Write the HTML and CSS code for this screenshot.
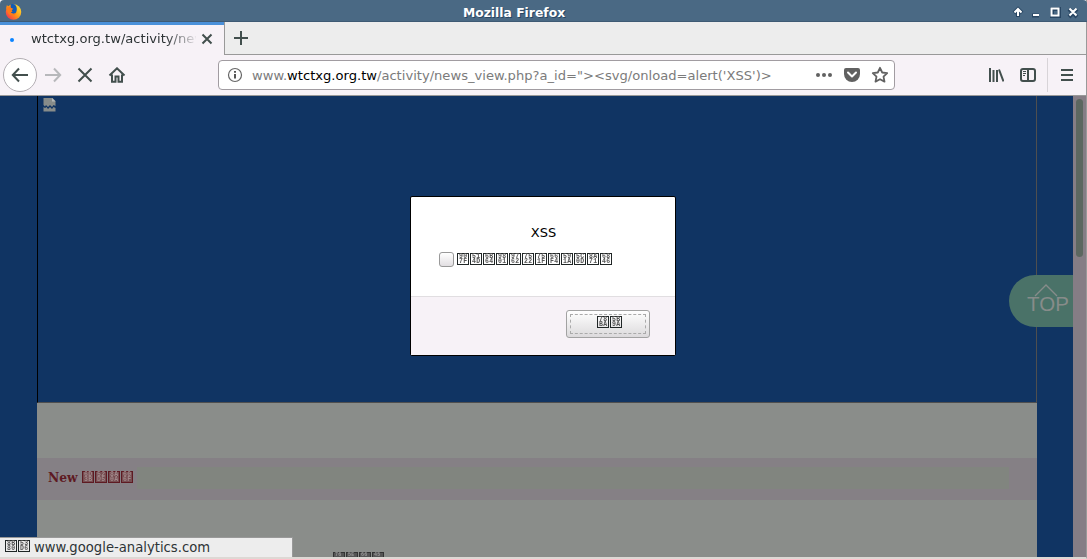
FILE: index.html
```
<!DOCTYPE html>
<html lang="zh-Hant">
<head>
<meta charset="utf-8">
<title>Mozilla Firefox</title>
<link rel="stylesheet" href="styles.css">
</head>
<body>
<div class="window">
  <header class="titlebar">
    <svg class="fox" width="17" height="17" viewBox="0 0 18 18">
      <defs><linearGradient id="flame" x1="1" y1="0" x2="0" y2="1"><stop offset="0" stop-color="#fff13a"/><stop offset=".5" stop-color="#ff9a16"/><stop offset="1" stop-color="#f5195b"/></linearGradient></defs>
      <circle cx="9" cy="9.500" r="8.200" fill="url(#flame)"/>
      <path d="M1 6 2 2l2 2 2-2 2 3Z" fill="#ff8a18"/>
      <path d="M6 1.500C9 0 12.500 2 12.500 6c0 4-1.500 6-4.500 5-2-.5-3-2-3-3l3-1-2-2Z" fill="#125bb5"/>
      <path d="M2 5c2-1 3-1 5 .5l2 .5-2 1.500 1 1.500-2 1c1 2 4 1.500 6 0-1 3-4 4-7 2.500C3 11 2 8 2 5Z" fill="#ff7a18"/>
    </svg>
    <span class="title">Mozilla Firefox</span>
    <svg class="winbtns" width="70" height="22" viewBox="0 0 70 22">
      <g fill="none" stroke="#284663" stroke-width="4"><path d="M8 17V9M4 13l4-4 4 4M22 15.500h7M42 9h7v7h-7zM59 9l8 8M67 9l-8 8"/></g>
      <g fill="none" stroke="#fff" stroke-width="2"><path d="M8 16V9M4.500 12.500 8 9l3.500 3.500M23 15h6M41.500 8.500h7v7h-7zM59.500 8.500l7 7M66.500 8.500l-7 7"/></g>
    </svg>
  </header>
  <div class="tabs">
    <div class="tab"><i class="dot"></i><span class="tabtext">wtctxg.org.tw/activity/ne<span class="fade">v</span></span>
      <svg class="close" width="12" height="12" viewBox="0 0 12 12"><path d="m1.500 1.500 9 9m0-9-9 9" class="line"/></svg></div>
    <div class="newtab"><svg width="16" height="16" viewBox="0 0 16 16"><path d="M8 1v14M1 8h14" class="line"/></svg></div>
  </div>
  <nav class="toolbar">
    <div class="back"><svg width="18" height="16" viewBox="0 0 18 16"><path d="M17 8H2M8 1.500 1.800 8 8 14.500" class="line"/></svg></div>
    <svg class="forward" width="18" height="16" viewBox="0 0 18 16"><path d="M1 8h15M10 1.500 16.200 8 10 14.500" class="line"/></svg>
    <svg class="stop" width="16" height="16" viewBox="0 0 16 16"><path d="m1.500 1.500 13 13m0-13-13 13" class="line"/></svg>
    <svg class="home" width="18" height="16" viewBox="0 0 18 16"><path d="M1.500 8.500 9 1.300l7.500 7.200M4 7.500v7.300h3.500V9.500h3v5.300H14V7.500" class="line"/></svg>
    <div class="urlbar">
      <svg width="16" height="16" viewBox="0 0 16 16"><circle cx="8" cy="8" r="6.500" fill="none" stroke="#666" stroke-width="1.200"/><path d="M8 7v4.500M8 4v1.800" stroke="#555" stroke-width="2"/></svg>
      <span class="url">www.<b>wtctxg.org.tw</b>/activity/news_view.php?a_id="&gt;&lt;svg/onload=alert('XSS')&gt;</span>
      <svg class="more" width="18" height="16" viewBox="0 0 18 16" fill="#616161"><circle cx="3" cy="8" r="2"/><circle cx="9" cy="8" r="2"/><circle cx="15" cy="8" r="2"/></svg>
      <svg class="pocket" width="16" height="16" viewBox="0 0 16 16"><path d="M2 1h12q2 0 2 2v4a8 8 0 0 1-16 0V3q0-2 2-2Z" fill="#616161"/><path d="m4 5.500 4 4 4-4" fill="none" stroke="#fff" stroke-width="2" stroke-linecap="round" stroke-linejoin="round"/></svg>
      <svg width="18" height="18" viewBox="0 0 18 18"><path d="m9 1.800 2.200 4.700 5 .6-3.700 3.500 1 5L9 13.200l-4.500 2.400 1-5L1.800 7.100l5-.6Z" fill="none" stroke="#616161" stroke-width="1.800" stroke-linejoin="round"/></svg>
    </div>
    <svg class="library" width="16" height="16" viewBox="0 0 16 16"><path d="M2 1v14M5.500 3v12M9 3v12" class="line"/><path d="m11 2.500 4.500 12" class="line"/></svg>
    <svg class="sidebar" width="16" height="16" viewBox="0 0 16 16"><rect x="1" y="2" width="14" height="12" rx="2" class="line"/><path d="M8 2v12" class="line"/><path d="M3 4.500h3M3 6.500h3M3 8.500h2" stroke="#424f4d"/></svg>
    <div class="burger"><svg width="14" height="14" viewBox="0 0 14 14"><path d="M1 2h12M1 7h12M1 12h12" class="line"/></svg></div>
  </nav>
  <main class="view">
    <div class="page">
      <section class="banner"><svg width="13" height="15" viewBox="0 0 13 15"><path d="M.5 1h9l3 3v5l-2-1-1.500 2L7 8l-2 2-2-2-1 1.500L.5 8Z" fill="#878c8a"/><path d="M9 1v3.500h3.500" fill="#b4b9b9"/><path d="M.5 10l1.500 1 1.500-1 1.500 2 2-2 2 2 1.500-2 2 1v3.500H.5Z" fill="#878c8a"/></svg></section>
      <section class="news"><span class="newslabel">New</span><span class="hexes red"><i class="hex">6D<br>3B</i><i class="hex">52<br>D5</i><i class="hex">8A<br>0A</i><i class="hex">60<br>6F</i></span><div class="marquee"></div></section>
      <section class="more-news"><span class="hexes dark"><i class="hex">76</i><i class="hex">5E</i><i class="hex">66</i><i class="hex">45</i></span></section>
    </div>
    <div class="scroll"><div class="thumb"></div></div>
    <div class="top"><svg width="26" height="14" viewBox="0 0 26 14"><path d="m2 13 11-11 11 11" fill="none" stroke="#878c8a" stroke-width="1.400"/></svg><span>TOP</span></div>
    <div class="dialog">
      <div class="dialogbody"><div class="message">XSS</div>
        <div class="option"><span class="check"></span><span class="hexes"><i class="hex">90<br>7F</i><i class="hex">51<br>4D</i><i class="hex">6B<br>64</i><i class="hex">98<br>01</i><i class="hex">97<br>62</i><i class="hex">75<br>22</i><i class="hex">75<br>1F</i><i class="hex">66<br>F4</i><i class="hex">59<br>1A</i><i class="hex">5C<br>0D</i><i class="hex">8A<br>71</i><i class="hex">68<br>46</i></span></div></div>
      <div class="actions"><div class="ok"><span class="focus"><span class="hexes"><i class="hex">78<br>BA</i><i class="hex">5B<br>9A</i></span></span></div></div>
    </div>
    <div class="status"><span class="hexes"><i class="hex">8B<br>80</i><i class="hex">53<br>D6</i></span><span>www.google-analytics.com</span></div>
  </main>
</div>
</body>
</html>
```
FILE: styles.css
```
* { box-sizing: border-box; }
body { margin: 0; overflow: hidden; font: 13.1px "DejaVu Sans", sans-serif; color: #2e3436; }
svg { display: block; flex: none; }
.window { width: 1087px; height: 559px; display: flex; flex-direction: column; border-right: 1px solid #999; border-bottom: 2px solid #ddd8d4; background: #f7f2f7; }
.titlebar { height: 22px; width: 1087px; flex: none; display: grid; grid-template-columns: 70px 1fr 77px; background: #4a6984; border-bottom: 1px solid #3e5a74; border-radius: 4px 4px 0 0; }
.fox { margin: 3px 0 0 5px; }
.title { color: #fff; font-weight: bold; font-size: 12.35px; line-height: 26px; height: 21px; text-align: center; padding-right: 52px; text-shadow: 1px 1px #284663; }
.line { fill: none; stroke: #424f4d; stroke-width: 2; }
.tabs { height: 33px; flex: none; display: flex; background: #ededed; }
.tab { width: 224px; display: flex; align-items: center; border-top: 3px solid #4a90d9; padding: 0 11px 0 10px; background: #f7f2f7; }
.dot { flex: none; width: 4px; height: 4px; border-radius: 50%; background: #0a84ff; margin-right: 17px; }
.tabtext { flex: none; width: 165px; margin: 0 5px 3px 0; line-height: 18px; white-space: nowrap; -webkit-mask-image: linear-gradient(90deg, #000 135px, transparent 168px); mask-image: linear-gradient(90deg, #000 135px, transparent 168px); }
.fade { opacity: .6; }
.close { margin-bottom: 2px; }
.newtab { flex: 1; border-left: 1px solid #999; border-bottom: 1px solid #999; padding: 8px; }
.toolbar { height: 41px; flex: none; display: flex; align-items: center; border-bottom: 1px solid #999; padding-left: 3px; }
.back { width: 34px; height: 34px; border: 1px solid #b3aeb3; border-radius: 50%; background: #fff; display: grid; place-items: center; }
.forward { margin-left: 7px; opacity: .35; }
.stop { margin-left: 15px; }
.home { margin-left: 15px; }
.urlbar { width: 677px; height: 30px; margin-left: 92px; border: 1px solid #a19ca1; border-radius: 4px; background: #fff; display: flex; align-items: center; padding: 0 5px 0 8px; }
.url { flex: 1; margin-left: 9px; color: #7b7b7b; white-space: nowrap; }
.url b { font-weight: normal; color: #000; }
.more { margin-right: 11px; }
.pocket { margin-right: 11px; }
.library { margin-left: 93px; }
.sidebar { margin-left: 16px; }
.burger { height: 34px; margin-left: 11px; border-left: 1px solid #d8d4d8; padding: 10px 0 0 12px; }
.view { position: relative; flex: 1; display: flex; background: #103463; overflow: hidden; }
.page { width: 1000px; margin-left: 37px; background: #8a8d8a; }
.banner { height: 307px; background: #103463; border: solid #4f4f4f; border-width: 0 1px 1px; border-left-color: #000; padding: 1px 0 0 5px; }
.news { height: 42px; margin-top: 55px; background: #858085; display: flex; align-items: center; padding: 0 28px 0 11px; }
.newslabel { width: 34px; margin-bottom: 3px; color: #5e1a22; font: bold 12.3px "DejaVu Serif", serif; }
.marquee { flex: 1; height: 22px; margin: 0 0 3px 4px; background: #81857f; }
.more-news { padding: 52px 0 0 296px; }
.hexes { display: flex; flex: none; gap: 1px; will-change: transform; }
.hex { display: block; width: 12px; height: 12px; border: 1px solid #202626; padding-left: 1px; font: bold 6.5px/5px "Liberation Mono", monospace; letter-spacing: 0.3px; color: #555; }
.red { margin-bottom: 4px; }
.red .hex { border-color: #5e1a22; color: #a1898b; background: #764d51; }
.dark .hex { height: 5px; border-bottom: 0; background: #555; border-color: #333; color: #999; font-size: 5px; line-height: 4px; }
.scroll { width: 13px; margin-left: 36px; background: #857d85; padding: 3px; }
.thumb { width: 7px; height: 158px; border-radius: 4px; background: #5c6760; }
.top { position: absolute; right: 13px; top: 179px; width: 64px; height: 52px; border-radius: 26px 0 0 26px; background: #4a7268; display: flex; flex-direction: column; align-items: center; padding: 8px 0 0 9px; color: #878c8a; font: 20.5px/16px "Liberation Sans", sans-serif; }
.top span { margin: -1px 0 0 5px; }
.dialog { position: absolute; left: 410px; top: 100px; width: 266px; height: 160px; border: 1px solid #000; border-radius: 2px; background: #fff; }
.dialogbody { height: 99px; padding-top: 28px; color: #000; }
.message { text-align: center; line-height: 15px; padding-left: 1px; font-size: 13px; }
.option { display: flex; align-items: center; gap: 3px; margin: 12px 0 0 28px; }
.option .hexes { margin-bottom: 1px; }
.check { width: 15px; height: 15px; border: 1px solid #999; border-radius: 3px; background: linear-gradient(#fff, #e2dfe2); }
.actions { height: 59px; background: #f7f2f7; border-top: 1px solid #e1dee1; padding: 13px 25px 0 0; display: flex; justify-content: flex-end; }
.ok { width: 84px; height: 28px; border: 1px solid #a2a2a2; border-radius: 3px; background: linear-gradient(#fff, #dcdadc); padding: 3px; }
.focus { display: flex; justify-content: center; height: 20px; border: 1px dashed #aaa; padding: 1px 0 0 3px; }
.status { position: absolute; left: 0; bottom: 0; width: 293px; height: 20px; background: #ededed; border-top: 1px solid #999; border-right: 1px solid #999; display: flex; align-items: center; gap: 4px; padding-left: 5px; font-size: 13.2px; }
.status .hexes { margin-bottom: 3px; }
```
